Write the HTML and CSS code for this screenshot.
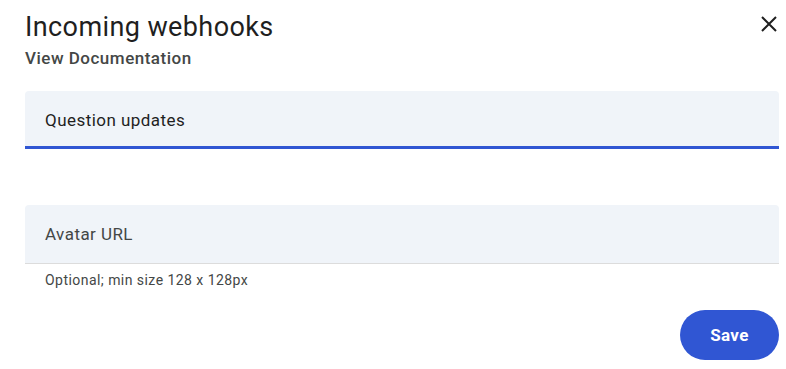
FILE: index.html
```html
<!DOCTYPE html>
<html>
<head>
<meta charset="utf-8">
<link rel="stylesheet" href="styles.css">
</head>
<body>
<div class="dialog">
  <div class="header">
    <div class="titles">
      <h1 class="title">Incoming webhooks</h1>
      <a class="doc-link">View Documentation</a>
    </div>
    <button class="close" aria-label="Close">
      <svg width="24" height="24" viewBox="0 0 24 24"><path d="M5 5L19 19M19 5L5 19" stroke="#1f1f1f" stroke-width="2" fill="none"/></svg>
    </button>
  </div>
  <div class="field active">
    <span class="field-text">Question updates</span>
  </div>
  <div class="field plain">
    <span class="field-text placeholder">Avatar URL</span>
  </div>
  <div class="helper">Optional; min size 128 x 128px</div>
  <div class="actions">
    <button class="save">Save</button>
  </div>
</div>
</body>
</html>
```

FILE: styles.css
```css
* { box-sizing: border-box; }
html, body { margin: 0; padding: 0; background: #fff; }
body { font-family: Roboto, "Noto Sans", sans-serif; color: #1f1f1f; }
.dialog { width: 786px; height: 369px; padding: 10px 7px 0 25px; }
.header { display: flex; justify-content: space-between; align-items: flex-start; }
.titles { display: flex; flex-direction: column; }
.title { margin: 0; font-size: 27px; font-weight: 400; line-height: 34px; letter-spacing: 0.4px; color: #1f1f1f; }
.doc-link { font-size: 17px; font-weight: 500; color: #444746; line-height: 20px; margin-top: 4px; letter-spacing: 0.5px; }
.close { background: none; border: 0; padding: 0; margin: 2px -2px 0 0; width: 24px; height: 24px; cursor: pointer; }
.field { height: 58px; margin-top: 23px; background: #f0f4f9; border-radius: 4px 4px 0 0; display: flex; align-items: center; padding: 0 20px; }
.field.active { border-bottom: 3px solid #3056d3; padding-top: 2px; }
.field.plain { margin-top: 56px; border-bottom: 1px solid #dcdcdc; height: 59px; }
.field-text { font-size: 17px; color: #1f1f1f; letter-spacing: 0.45px; }
.placeholder { color: #444746; }
.helper { font-size: 14px; color: #444746; padding: 8px 20px 0; line-height: 16px; letter-spacing: 0.45px; }
.actions { display: flex; justify-content: flex-end; margin-top: 22px; }
.save { background: #3056d3; color: #fff; border: 0; border-radius: 25px; width: 99px; height: 50px; font-family: Roboto, sans-serif; font-size: 17px; font-weight: 700; letter-spacing: 0.3px; }
```
